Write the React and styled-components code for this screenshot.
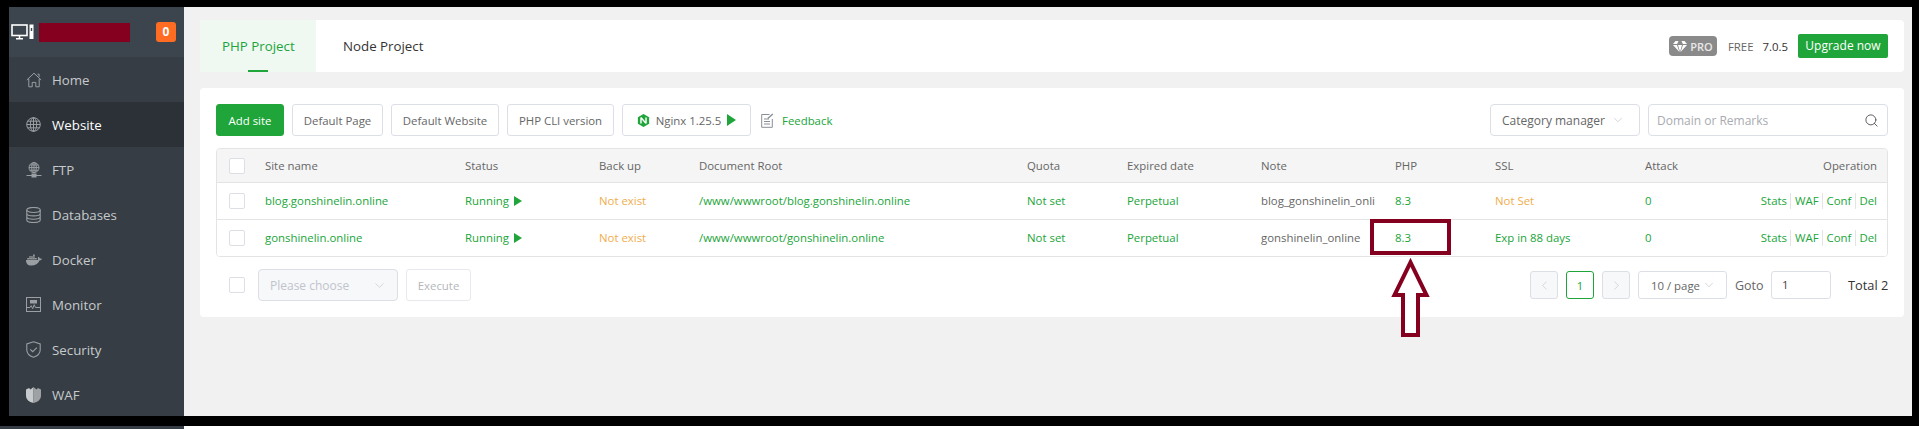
import styled, { createGlobalStyle } from 'styled-components';
import { ChevronDown, ChevronLeft, ChevronRight, Search } from 'lucide-react';
import { FaDocker } from 'react-icons/fa';
import { SiNginx } from 'react-icons/si';

const GREEN = '#20a53a';
const ORANGE = '#f0ad4e';
const MAROON = '#85001f';

const GlobalStyle = createGlobalStyle`
  html, body {
    margin: 0;
    padding: 0;
    background: #000;
    overflow: hidden;
  }
  * { box-sizing: border-box; }
  body {
    font-family: "Open Sans", "Noto Sans", "Liberation Sans", sans-serif;
    font-size: 11.4px;
    color: #666;
  }
`;

//Icons drawn by hand, the panel's own set is not in any package
const HomeIcon = () => (
  <svg width="16" height="16" viewBox="0 0 16 16" fill="none" stroke="currentColor" strokeWidth="1">
    <path d="M.8 8 8 1.2 15.2 8M2.8 6.8v8h3.4v-4.4h3.6v4.4h3.4V6.8M11.5 2.2h1.6v2.6" />
  </svg>
);
const GlobeIcon = () => (
  <svg width="15" height="15" viewBox="0 0 15 15" fill="none" stroke="currentColor" strokeWidth="1">
    <circle cx="7.5" cy="7.5" r="6.8" />
    <ellipse cx="7.5" cy="7.5" rx="3.2" ry="6.8" />
    <path d="M7.5.7v13.6M.7 7.5h13.6M1.6 4.2h11.8M1.6 10.8h11.8" />
  </svg>
);
const FtpIcon = () => (
  <svg width="16" height="16" viewBox="0 0 16 16" fill="none" stroke="currentColor" strokeWidth="1">
    <circle cx="8" cy="5.6" r="5" />
    <ellipse cx="8" cy="5.6" rx="2.3" ry="5" />
    <path d="M8 .6v10M3 5.6h10M3.8 3h8.4M3.8 8.2h8.4M.5 13.5h15" />
    <rect x="6" y="12" width="4" height="3" fill="currentColor" />
  </svg>
);
const DatabaseIcon = () => (
  <svg width="15" height="16" viewBox="0 0 15 16" fill="none" stroke="currentColor" strokeWidth="1.1">
    <ellipse cx="7.5" cy="3" rx="6.7" ry="2.5" />
    <path d="M.8 3v10c0 1.4 3 2.5 6.7 2.5s6.7-1.1 6.7-2.5V3M.8 6.4c0 1.4 3 2.5 6.7 2.5s6.7-1.1 6.7-2.5M.8 9.7c0 1.4 3 2.5 6.7 2.5s6.7-1.1 6.7-2.5" />
  </svg>
);
const MonitorIcon = () => (
  <svg width="15" height="15" viewBox="0 0 15 15" fill="none" stroke="currentColor" strokeWidth="1">
    <rect x=".5" y=".5" width="14" height="14" />
    <rect x="4" y="3" width="7" height="3.5" fill="currentColor" stroke="none" />
    <path d="M1 10.5h3l1.2-1.8 1.5 3 1.5-4 1.3 2.8h4.5" />
  </svg>
);
const ShieldIcon = () => (
  <svg width="15" height="17" viewBox="0 0 15 17" fill="none" stroke="currentColor" strokeWidth="1.1">
    <path d="M7.5.8 14.2 3v6c0 3.600-3 6-6.700 7.300C3.800 15 .8 12.600.8 9V3z" />
    <path d="m4.200 8.300 2.500 2.400 4.200-4" />
  </svg>
);
const WafIcon = () => (
  <svg width="15" height="16" viewBox="0 0 15 16">
    <path d="M0 2.5 3 1l1.500 1.500L7.500 0v16C3 15 0 12.500 0 8.500z" fill="#c8cbcd" />
    <path d="M7.500 0l3 2.500L12 1l3 1.500v6c0 4-3 6.500-7.500 7.500z" fill="#9ea2a5" />
  </svg>
);
const DesktopIcon = () => (
  <svg width="23" height="16" viewBox="0 0 23 16" fill="none" stroke="#fff">
    <rect x="1" y="1" width="15" height="10.5" strokeWidth="1.6" />
    <path d="M8.500 12v2M5 14.800h7" strokeWidth="1.5" />
    <rect x="18.5" y=".5" width="4" height="14.5" fill="#fff" stroke="none" />
    <rect x="19.8" y="4" width="1.4" height="3" fill="#3c444d" stroke="none" />
  </svg>
);
const FeedbackIcon = () => (
  <svg width="13" height="15" viewBox="0 0 13 15" fill="none" stroke="#8a8f96">
    <path d="M8.500 1.500H.7v12.800h10.600V6M3 6h5M3 8.500h6M3 11h6" />
    <path d="m6.800 5.500 5-4.500" strokeWidth="1.4" />
  </svg>
);
const DiamondIcon = () => (
  <svg width="14" height="11" viewBox="0 0 14 11" fill="#fff">
    <path d="M2.500 0h9L14 3H9.800L8.500 0h-3L4.200 3H0zM0 4h4l2.400 7zM5 4h4l-2 7zM10 4h4l-6.400 7z" />
  </svg>
);

const navItems = [
  { label: 'Home', icon: <HomeIcon /> },
  { label: 'Website', icon: <GlobeIcon />, active: true },
  { label: 'FTP', icon: <FtpIcon /> },
  { label: 'Databases', icon: <DatabaseIcon /> },
  { label: 'Docker', icon: <FaDocker size={16} /> },
  { label: 'Monitor', icon: <MonitorIcon /> },
  { label: 'Security', icon: <ShieldIcon /> },
  { label: 'WAF', icon: <WafIcon /> },
];

const columns = ['38px', '200px', '134px', '100px', '328px', '100px', '134px', '134px', '100px', '150px', '90px', '1fr'];
const headers = ['Site name', 'Status', 'Back up', 'Document Root', 'Quota', 'Expired date', 'Note', 'PHP', 'SSL', 'Attack'];

const sites = [
  {
    name: 'blog.gonshinelin.online',
    root: '/www/wwwroot/blog.gonshinelin.online',
    note: 'blog_gonshinelin_onli',
    ssl: 'Not Set',
    sslTone: ORANGE,
  },
  {
    name: 'gonshinelin.online',
    root: '/www/wwwroot/gonshinelin.online',
    note: 'gonshinelin_online',
    ssl: 'Exp in 88 days',
    sslTone: GREEN,
  },
];

const operations = ['Stats', 'WAF', 'Conf', 'Del'];

const App = () => {
  return (
    <Page>
      <GlobalStyle />
      <Frame>
        <Sidebar>
          <Brand>
            <DesktopIcon />
            <Redaction />
            <Badge>0</Badge>
          </Brand>
          {navItems.map((item) => (
            <NavItem key={item.label} $active={item.active}>
              <NavIcon>{item.icon}</NavIcon>
              {item.label}
            </NavItem>
          ))}
        </Sidebar>

        <Main>
          <TabCard>
            <Tab $active>PHP Project</Tab>
            <Tab>Node Project</Tab>
            <TabInfo>
              <ProBadge><DiamondIcon />PRO</ProBadge>
              <InfoText $gap={11}>FREE</InfoText>
              <InfoText $gap={9} $dark>7.0.5</InfoText>
              <UpgradeButton>Upgrade now</UpgradeButton>
            </TabInfo>
          </TabCard>

          <Card>
            <Toolbar>
              <PrimaryButton $width={68}>Add site</PrimaryButton>
              <Button $width={91}>Default Page</Button>
              <Button $width={108}>Default Website</Button>
              <Button $width={107}>PHP CLI version</Button>
              <Button $width={129}>
                <SiNginx size={13} color={GREEN} />
                Nginx 1.25.5
                <PlayArrow />
              </Button>
              <FeedbackLink>
                <FeedbackIcon />
                <span>Feedback</span>
              </FeedbackLink>
              <ToolbarRight>
                <Select $width={150}>
                  Category manager
                  <ChevronDown size={14} strokeWidth={1} color="#b5b8be" />
                </Select>
                <SearchBox>
                  <span>Domain or Remarks</span>
                  <Search size={15} strokeWidth={1.5} color="#555" />
                </SearchBox>
              </ToolbarRight>
            </Toolbar>

            <Table>
              <HeadRow>
                <CheckCell><Checkbox /></CheckCell>
                {headers.map((title) => (
                  <Cell key={title}>{title}</Cell>
                ))}
                <Cell $right>Operation</Cell>
              </HeadRow>
              {sites.map((site) => (
                <Row key={site.name}>
                  <CheckCell><Checkbox /></CheckCell>
                  <Cell $tone={GREEN}>{site.name}</Cell>
                  <Cell $tone={GREEN}>Running<PlayArrow $small /></Cell>
                  <Cell $tone={ORANGE}>Not exist</Cell>
                  <Cell $tone={GREEN}>{site.root}</Cell>
                  <Cell $tone={GREEN}>Not set</Cell>
                  <Cell $tone={GREEN}>Perpetual</Cell>
                  <Cell>{site.note}</Cell>
                  <Cell $tone={GREEN}>8.3</Cell>
                  <Cell $tone={site.sslTone}>{site.ssl}</Cell>
                  <Cell $tone={GREEN}>0</Cell>
                  <Cell $right $tone={GREEN}>
                    <Operations>
                      {operations.map((op) => (
                        <Operation key={op}>{op}</Operation>
                      ))}
                    </Operations>
                  </Cell>
                </Row>
              ))}
            </Table>

            <Footer>
              <BatchGroup>
                <Checkbox />
                <DisabledSelect $width={140}>
                  Please choose
                  <ChevronDown size={15} strokeWidth={1} color="#c0c4cc" />
                </DisabledSelect>
                <ExecuteButton $width={65}>Execute</ExecuteButton>
              </BatchGroup>
              <Pagination>
                <PageArrow><ChevronLeft size={15} strokeWidth={1} color="#c0c4cc" /></PageArrow>
                <PageNumber>1</PageNumber>
                <PageArrow><ChevronRight size={15} strokeWidth={1} color="#c0c4cc" /></PageArrow>
                <PageSize>
                  10 / page
                  <ChevronDown size={14} strokeWidth={1} color="#b5b8be" />
                </PageSize>
                <GotoLabel>Goto</GotoLabel>
                <GotoInput>1</GotoInput>
                <Total>Total 2</Total>
              </Pagination>
            </Footer>
          </Card>
        </Main>
      </Frame>

      <BottomStrip>
        <StripLeft />
        <StripRight />
      </BottomStrip>

      {/* red markup drawn over the screenshot */}
      <HighlightBox />
      <UpArrow width="44" height="82" viewBox="0 0 44 82">
        <path d="M22.500 6.300 38.500 39H30V79H15V39H6.500z" fill="#fff" stroke={MAROON} strokeWidth="4" />
      </UpArrow>
    </Page>
  );
};

export default App;

const Page = styled.div`
  position: relative;
  width: 1919px;
  height: 429px;
  background: #000;
  padding-top: 7px;
  overflow: hidden;
`;

const Frame = styled.div`
  display: flex;
  height: 409px;
  margin: 0 7px 0 9px;
  background: #f1f1f1;
  overflow: hidden;
`;

const Sidebar = styled.div`
  width: 175px;
  flex-shrink: 0;
  background: #363d44;
`;

const Brand = styled.div`
  height: 50px;
  display: flex;
  align-items: center;
  padding: 0 8px 0 2px;
  background: #3c444d;
`;

const Redaction = styled.div`
  width: 91px;
  height: 19px;
  margin-left: 5px;
  background: ${MAROON};
`;

const Badge = styled.div`
  width: 20px;
  height: 20px;
  margin-left: auto;
  border-radius: 3px;
  background: #ff6c22;
  color: #fff;
  font-weight: 700;
  font-size: 12px;
  line-height: 20px;
  text-align: center;
`;

const NavItem = styled.div`
  height: 45px;
  display: flex;
  align-items: center;
  padding-left: 17px;
  font-size: 13.3px;
  color: ${(props) => (props.$active ? '#fff' : '#c6cacd')};
  background: ${(props) => (props.$active ? '#2c3138' : 'transparent')};
`;

const NavIcon = styled.span`
  width: 26px;
  display: flex;
  align-items: center;
  color: #9a9fa3;
`;

const Main = styled.div`
  flex: 1;
  padding: 13px 8px 0 16px;
`;

const TabCard = styled.div`
  height: 52px;
  display: flex;
  gap: 5px;
  align-items: stretch;
  padding-right: 16px;
  background: #fff;
  border-radius: 4px;
  overflow: hidden;
`;

const Tab = styled.div`
  position: relative;
  width: ${(props) => (props.$active ? '116px' : 'auto')};
  display: flex;
  align-items: center;
  padding: 0 22px;
  white-space: nowrap;
  font-size: 13.3px;
  color: ${(props) => (props.$active ? GREEN : '#333')};
  background: ${(props) => (props.$active ? '#f0f8f2' : 'transparent')};

  &::after {
    content: '';
    display: ${(props) => (props.$active ? 'block' : 'none')};
    position: absolute;
    left: 48px;
    bottom: 0;
    width: 20px;
    height: 2px;
    background: ${GREEN};
  }
`;

const TabInfo = styled.div`
  margin-left: auto;
  display: flex;
  align-items: center;
`;

const ProBadge = styled.div`
  width: 48px;
  height: 20px;
  display: flex;
  align-items: center;
  justify-content: center;
  gap: 3px;
  border-radius: 4px;
  background: #8a8a8a;
  color: #e8e8e8;
  font-size: 11px;
  font-weight: 600;
`;

const InfoText = styled.span`
  margin-left: ${(props) => props.$gap}px;
  color: ${(props) => (props.$dark ? '#333' : '#666')};
`;

const UpgradeButton = styled.div`
  width: 90px;
  height: 24px;
  margin-left: 10px;
  border-radius: 2px;
  background: ${GREEN};
  color: #fff;
  font-size: 12px;
  line-height: 24px;
  text-align: center;
`;

const Card = styled.div`
  margin-top: 16px;
  padding: 16px;
  background: #fff;
  border-radius: 4px;
`;

const Toolbar = styled.div`
  display: flex;
  align-items: center;
  gap: 8px;
`;

const ToolbarRight = styled.div`
  margin-left: auto;
  display: flex;
  gap: 8px;
`;

const Button = styled.div`
  width: ${(props) => props.$width}px;
  height: 32px;
  display: flex;
  align-items: center;
  justify-content: center;
  gap: 6px;
  white-space: nowrap;
  border: 1px solid #dcdfe6;
  border-radius: 3px;
  color: #666;
  background: #fff;
`;

const PrimaryButton = styled(Button)`
  border-color: ${GREEN};
  background: ${GREEN};
  color: #fff;
`;

const PlayArrow = styled.i`
  display: inline-block;
  margin-left: ${(props) => (props.$small ? '5px' : '0')};
  border-style: solid;
  border-width: ${(props) => (props.$small ? '5px 0 5px 8px' : '6px 0 6px 9px')};
  border-color: transparent transparent transparent ${GREEN};
`;

const FeedbackLink = styled.div`
  display: flex;
  align-items: center;
  gap: 8px;
  margin-left: 2px;
  color: ${GREEN};
`;

const Select = styled.div`
  width: ${(props) => props.$width}px;
  height: 32px;
  display: flex;
  align-items: center;
  justify-content: space-between;
  padding: 0 14px 0 11px;
  border: 1px solid #dcdfe6;
  border-radius: 4px;
  font-size: 12px;
  color: #666;
`;

const SearchBox = styled.div`
  width: 240px;
  height: 32px;
  display: flex;
  align-items: center;
  justify-content: space-between;
  padding: 0 8px;
  border: 1px solid #dcdfe6;
  border-radius: 4px;
  font-size: 12px;
  color: #a9abb0;
`;

const Table = styled.div`
  margin-top: 12px;
  border: 1px solid #e4e4e4;
  border-radius: 4px;
  overflow: hidden;
`;

const HeadRow = styled.div`
  display: grid;
  grid-template-columns: ${columns.join(' ')};
  height: 34px;
  align-items: center;
  background: #f5f5f5;
  border-bottom: 1px solid #e4e4e4;
`;

const Row = styled(HeadRow)`
  height: 36.5px;
  background: #fff;

  &:last-child {
    border-bottom: 0;
  }
`;

const Cell = styled.div`
  padding: 0 10px;
  white-space: nowrap;
  overflow: hidden;
  display: flex;
  align-items: center;
  justify-content: ${(props) => (props.$right ? 'flex-end' : 'flex-start')};
  color: ${(props) => props.$tone || '#666'};
`;

const CheckCell = styled.div`
  padding-left: 12px;
  display: flex;
  align-items: center;
`;

const Checkbox = styled.div`
  width: 16px;
  height: 16px;
  flex-shrink: 0;
  border: 1px solid #dcdfe6;
  border-radius: 2px;
  background: #fff;
`;

const Operations = styled.div`
  display: flex;
`;

const Operation = styled.span`
  padding: 0 3.5px;
  line-height: 16px;
  border-right: 1px solid #e4e4e4;

  &:last-child {
    padding-right: 0;
    border-right: 0;
  }
`;

const Footer = styled.div`
  margin-top: 12px;
  height: 32px;
  display: flex;
  align-items: center;
  justify-content: space-between;
`;

const BatchGroup = styled.div`
  display: flex;
  align-items: center;
  padding-left: 13px;
`;

const DisabledSelect = styled(Select)`
  margin-left: 13px;
  background: #f7f8fa;
  color: #c0c4cc;
  padding-right: 10px;
`;

const ExecuteButton = styled(Button)`
  margin-left: 8px;
  border-color: #e7e9ee;
  color: #b4b6ba;
`;

const Pagination = styled.div`
  display: flex;
  align-items: center;
  gap: 8px;
  color: #666;
`;

const PageArrow = styled.div`
  width: 28px;
  height: 28px;
  display: flex;
  align-items: center;
  justify-content: center;
  border: 1px solid #dcdfe6;
  border-radius: 3px;
  background: #f7f8fa;
`;

const PageNumber = styled(PageArrow)`
  border-color: ${GREEN};
  background: #fff;
  color: ${GREEN};
`;

const PageSize = styled.div`
  width: 89px;
  height: 28px;
  display: flex;
  align-items: center;
  justify-content: space-between;
  white-space: nowrap;
  padding: 0 10px 0 12px;
  border: 1px solid #dcdfe6;
  border-radius: 3px;
`;

const GotoLabel = styled.span`
  width: 28px;
  font-size: 12.5px;
`;

const GotoInput = styled.div`
  width: 60px;
  height: 28px;
  padding-left: 10px;
  border: 1px solid #dcdfe6;
  border-radius: 3px;
  line-height: 26px;
  color: #444;
`;

const Total = styled.span`
  width: 40px;
  margin-left: 9px;
  text-align: right;
  white-space: nowrap;
  font-size: 12.8px;
  color: #333;
`;

const BottomStrip = styled.div`
  display: flex;
  height: 3px;
  margin-top: 10px;
`;

const StripLeft = styled.div`
  width: 184px;
  background: #363d44;
`;

const StripRight = styled.div`
  flex: 1;
  background: #fff;
`;

const HighlightBox = styled.div`
  position: absolute;
  left: 1370px;
  top: 219px;
  width: 81px;
  height: 36px;
  border: 4px solid ${MAROON};
`;

const UpArrow = styled.svg`
  position: absolute;
  left: 1388px;
  top: 256px;
`;
